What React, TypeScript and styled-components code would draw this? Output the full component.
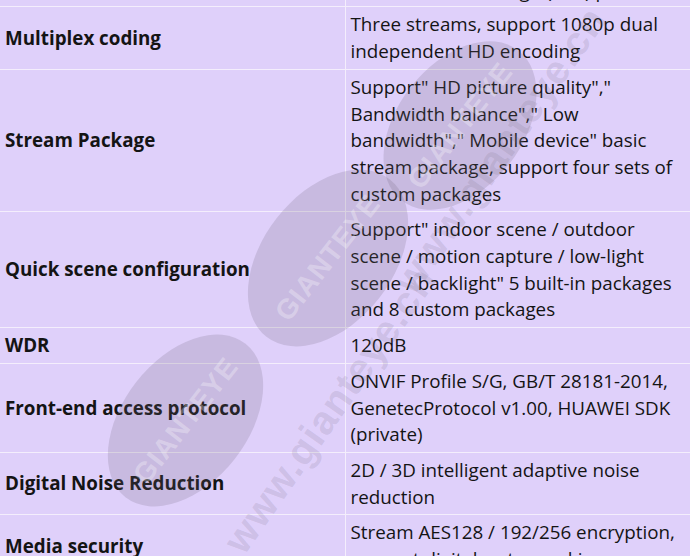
import React from "react";
import styled, { createGlobalStyle } from "styled-components";

const Global = createGlobalStyle`
  html, body { margin: 0; padding: 0; background: #dfd0fa; }
  body { font-family: "Open Sans", "Noto Sans", sans-serif; }
`;

const Page = styled.div`
  position: relative;
  width: 690px;
  height: 556px;
  overflow: hidden;
  background: #dfd0fa;
`;

const Table = styled.table`
  width: 690px;
  margin-top: -54px;
  border-collapse: collapse;
  table-layout: fixed;
  color: #141414;
`;

const Row = styled.tr``;

const Label = styled.td`
  box-sizing: border-box;
  width: 345px;
  padding: 4px 5px;
  border: 1px solid #f4eefc;
  border-left: none;
  font-weight: 700;
  font-size: 18.8px;
  line-height: 26.7px;
  vertical-align: middle;
  white-space: nowrap;
`;

const Value = styled.td<{ $tight?: boolean }>`
  padding: 4px 4px ${(p) => (p.$tight ? "2px" : "4px")} 5px;
  border: 1px solid #f4eefc;
  border-right: none;
  font-size: 18.8px;
  line-height: 26.7px;
  vertical-align: top;
`;

const Watermark = styled.div`
  position: absolute;
  inset: 0;
  pointer-events: none;
`;

const Blob = styled.div<{ $x: number; $y: number; $w: number; $h: number }>`
  position: absolute;
  left: ${(p) => p.$x - p.$w / 2}px;
  top: ${(p) => p.$y - p.$h / 2}px;
  width: ${(p) => p.$w}px;
  height: ${(p) => p.$h}px;
  border-radius: 50%;
  background: rgba(110, 100, 120, 0.2);
  transform: rotate(-52deg);
  display: flex;
  align-items: center;
  justify-content: center;
  color: rgba(255, 255, 255, 0.3);
  font-family: "Liberation Sans", Arial, sans-serif;
  font-weight: 700;
  font-size: 28px;
  letter-spacing: 1px;
`;

const Site = styled.div<{ $x: number; $y: number }>`
  position: absolute;
  left: ${(p) => p.$x}px;
  top: ${(p) => p.$y}px;
  transform: translate(-50%, -50%) rotate(-55deg);
  white-space: nowrap;
  color: rgba(120, 110, 130, 0.18);
  font-family: "Liberation Sans", Arial, sans-serif;
  font-weight: 700;
  font-size: 40px;
  letter-spacing: 1px;
`;

const rows: [string, string][] = [
  ["Video compression", "H.265 / H.264 / MJPEG, support H.264 Baseline / Main / High (SVC) profile"],
  ["Multiplex coding", "Three streams, support 1080p dual independent HD encoding"],
  [
    "Stream Package",
    'Support" HD picture quality"," Bandwidth balance"," Low bandwidth"," Mobile device" basic stream package, support four sets of custom packages',
  ],
  [
    "Quick scene configuration",
    'Support" indoor scene / outdoor scene / motion capture / low-light scene / backlight" 5 built-in packages and 8 custom packages',
  ],
  ["WDR", "120dB"],
  [
    "Front-end access protocol",
    "ONVIF Profile S/G, GB/T 28181-2014, GenetecProtocol v1.00, HUAWEI SDK (private)",
  ],
  ["Digital Noise Reduction", "2D / 3D intelligent adaptive noise reduction"],
  ["Media security", "Stream AES128 / 192/256 encryption, support digital watermarking"],
];

export default function App() {
  return (
    <Page>
      <Global />
      <Table>
        <tbody>
          {rows.map(([k, v], i) => (
            <Row key={k}>
              <Label>{k}</Label>
              <Value $tight={i === 0}>{v}</Value>
            </Row>
          ))}
        </tbody>
      </Table>
      <Watermark>
        <Blob $x={460} $y={125} $w={190} $h={125}>GIANTEYE</Blob>
        <Blob $x={328} $y={258} $w={200} $h={130}>GIANTEYE</Blob>
        <Blob $x={185} $y={420} $w={195} $h={125}>GIANTEYE</Blob>
        <Site $x={330} $y={410}>www.gianteye.cn</Site>
        <Site $x={500} $y={150}>www.gianteye.cn</Site>
      </Watermark>
    </Page>
  );
}
